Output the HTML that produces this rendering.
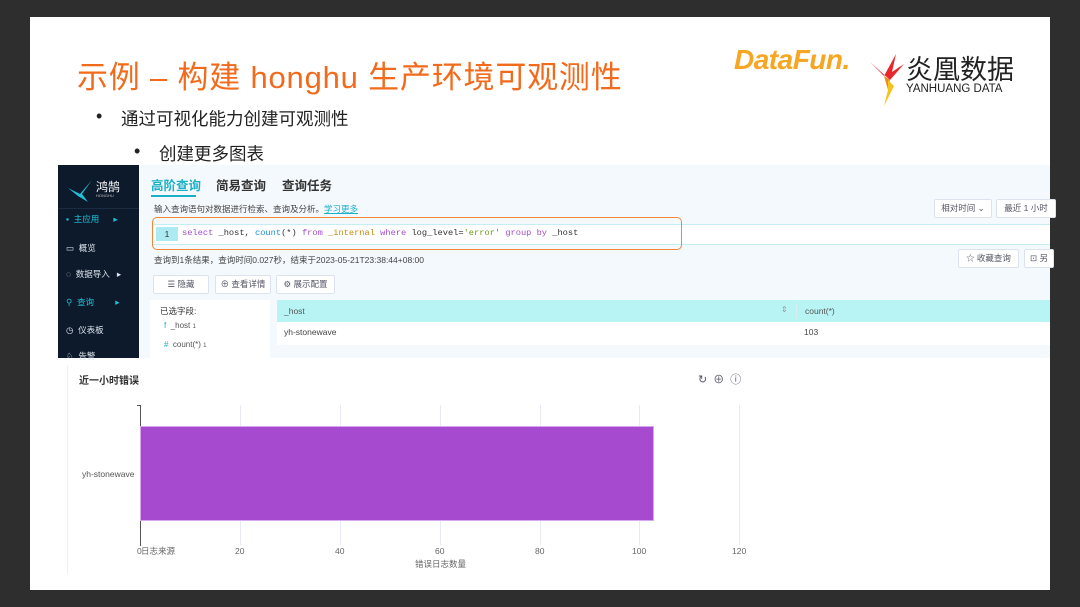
<!DOCTYPE html>
<html><head><meta charset="utf-8">
<style>
*{margin:0;padding:0;box-sizing:border-box}
body{width:1080px;height:607px;background:#2e2e2e;position:relative;overflow:hidden;font-family:"Liberation Sans","Noto Sans CJK SC",sans-serif}
.a{position:absolute;white-space:nowrap}
#slide{position:absolute;left:30px;top:17px;width:1020px;height:573px;background:#fff}
.mono{font-family:"Liberation Mono","Noto Sans CJK SC",monospace}
.btn{position:absolute;height:19px;border:1px solid #dde3ee;background:#fff;border-radius:2px;font-size:8.5px;color:#556;line-height:17px;text-align:center}
.nav{position:absolute;left:64px;font-size:8.5px;color:#dfe6ee}
.tick{position:absolute;top:546px;font-size:8.5px;color:#666}
.grid{position:absolute;top:405px;width:1px;height:140px;background:#e8e8f6}
</style></head><body>
<div id="slide"></div>
<div class="a" style="left:77px;top:52px;font-size:31px;color:#f26a1b;letter-spacing:0.8px">示例 – 构建 honghu 生产环境可观测性</div>
<div class="a" style="left:96px;top:106px;font-size:18px;color:#222">•</div>
<div class="a" style="left:121px;top:106px;font-size:17.5px;color:#222">通过可视化能力创建可观测性</div>
<div class="a" style="left:134px;top:141px;font-size:18px;color:#222">•</div>
<div class="a" style="left:159px;top:141px;font-size:17.5px;color:#222">创建更多图表</div>

<!-- logos -->
<div class="a" style="left:734px;top:44px;font-size:28px;font-style:italic;font-weight:bold;color:#f6a623;letter-spacing:-0.5px">DataFun.</div>
<svg class="a" style="left:866px;top:50px" width="40" height="56" viewBox="0 0 40 56"><path d="M4 12 L18 26 L30 4 L26 22 L38 14 L24 30 Z" fill="#e8262b"/><path d="M18 26 L24 30 L22 40 Z" fill="#f08a1c"/><path d="M22 30 L28 36 L18 56 L22 40Z" fill="#f7c21a"/></svg>
<div class="a" style="left:906px;top:48px;font-size:27px;color:#222">炎凰数据</div>
<div class="a" style="left:906px;top:83px;font-size:11.5px;color:#222">YANHUANG DATA</div>

<!-- app -->
<div class="a" style="left:139px;top:165px;width:911px;height:193px;background:#f4f9fd"></div>
<div class="a" style="left:58px;top:165px;width:81px;height:193px;background:#0c1a2b"></div>
<svg class="a" style="left:66px;top:178px" width="30" height="26" viewBox="0 0 30 26"><path d="M26 2 L14 16 L2 10 L12 18 L22 24 L16 16 Z" fill="#1fc3d9"/></svg>
<div class="a" style="left:96px;top:178px;font-size:12px;color:#fff">鸿鹄</div>
<div class="a" style="left:96px;top:193px;font-size:4px;color:#bbb">HONGHU</div>
<div class="a" style="left:58px;top:208px;width:81px;height:1px;background:#1c2c40"></div>
<div class="nav" style="left:66px;top:213px;color:#1fc3d9">▪ &nbsp;主应用 &nbsp;&nbsp;&nbsp;&nbsp;&nbsp;▸</div>
<div class="nav" style="left:66px;top:242px">▭ &nbsp;概览</div>
<div class="nav" style="left:66px;top:268px">◌ &nbsp;数据导入 &nbsp;&nbsp;▸</div>
<div class="nav" style="left:66px;top:296px;color:#1fc3d9">⚲ &nbsp;查询 &nbsp;&nbsp;&nbsp;&nbsp;&nbsp;&nbsp;&nbsp;&nbsp;▸</div>
<div class="nav" style="left:66px;top:324px">◷ &nbsp;仪表板</div>
<div class="nav" style="left:66px;top:350px">♘ &nbsp;告警</div>

<div class="a" style="left:151px;top:175px;font-size:12.5px;font-weight:bold;color:#1ab0c8">高阶查询</div>
<div class="a" style="left:151px;top:195px;width:45px;height:2px;background:#1ab0c8"></div>
<div class="a" style="left:216px;top:175px;font-size:12.5px;font-weight:bold;color:#333">简易查询</div>
<div class="a" style="left:282px;top:175px;font-size:12.5px;font-weight:bold;color:#333">查询任务</div>
<div class="a" style="left:154px;top:203px;font-size:8.5px;color:#444">输入查询语句对数据进行检索、查询及分析。<span style="color:#1ab0c8;text-decoration:underline">学习更多</span></div>
<div class="btn" style="left:934px;top:199px;width:58px">相对时间 ⌄</div>
<div class="btn" style="left:996px;top:199px;width:60px">最近 1 小时</div>
<div class="a" style="left:152px;top:224px;width:898px;height:21px;background:#fff;border-top:1px solid #c4eef4;border-bottom:1px solid #c4eef4"></div>
<div class="a" style="left:156px;top:227px;width:22px;height:14px;background:#aeeaf2;font-size:8.5px;text-align:center;line-height:14px;color:#333" >1</div>
<div class="a mono" style="left:182px;top:228px;font-size:8.7px;color:#333"><span style="color:#a04dc8">select</span> _host, <span style="color:#1a8fd8">count</span>(*) <span style="color:#a04dc8">from</span> <span style="color:#c58a10">_internal</span> <span style="color:#a04dc8">where</span> log_level=<span style="color:#6a9a1a">'error'</span> <span style="color:#a04dc8">group by</span> _host</div>
<div class="a" style="left:152px;top:217px;width:530px;height:33px;border:1.5px solid #f2873a;border-radius:5px"></div>
<div class="a" style="left:154px;top:254px;font-size:8.5px;color:#444">查询到1条结果，查询时间0.027秒，结束于2023-05-21T23:38:44+08:00</div>
<div class="btn" style="left:958px;top:249px;width:61px">☆ 收藏查询</div>
<div class="btn" style="left:1024px;top:249px;width:30px">⊡ 另</div>
<div class="btn" style="left:153px;top:275px;width:56px">☰ 隐藏</div>
<div class="btn" style="left:215px;top:275px;width:56px">⊕ 查看详情</div>
<div class="btn" style="left:276px;top:275px;width:59px">⚙ 展示配置</div>
<div class="a" style="left:150px;top:300px;width:120px;height:58px;background:#fff"></div>
<div class="a" style="left:160px;top:305px;font-size:8.5px;color:#333">已选字段:</div>
<div class="a" style="left:164px;top:321px;font-size:8px;color:#555"><span style="color:#1ab0c8">f</span> &nbsp;_host <span style="font-size:6px">1</span></div>
<div class="a" style="left:164px;top:340px;font-size:8px;color:#555"><span style="color:#1ab0c8">#</span> &nbsp;count(*) <span style="font-size:6px">1</span></div>
<div class="a" style="left:277px;top:300px;width:773px;height:22px;background:#b9f4f5"></div>
<div class="a" style="left:284px;top:306px;font-size:8.5px;color:#555">_host</div>
<div class="a" style="left:781px;top:305px;font-size:8px;color:#999">⇕</div>
<div class="a" style="left:796px;top:303px;width:1px;height:16px;background:#d8eef0"></div>
<div class="a" style="left:805px;top:306px;font-size:8.5px;color:#555">count(*)</div>
<div class="a" style="left:277px;top:322px;width:773px;height:23px;background:#fff"></div>
<div class="a" style="left:284px;top:327px;font-size:8.5px;color:#444">yh-stonewave</div>
<div class="a" style="left:804px;top:327px;font-size:8.5px;color:#444">103</div>

<!-- chart -->
<div class="a" style="left:67px;top:366px;width:1px;height:208px;background:#e4f3f8"></div>
<div class="a" style="left:79px;top:372px;font-size:10px;font-weight:bold;color:#333">近一小时错误</div>
<div class="a" style="left:698px;top:371px;font-size:11px;color:#556;letter-spacing:6px">↻⊕ⓘ</div>
<div class="grid" style="left:240px"></div><div class="grid" style="left:340px"></div><div class="grid" style="left:440px"></div><div class="grid" style="left:540px"></div><div class="grid" style="left:639px"></div><div class="grid" style="left:739px"></div>
<div class="a" style="left:140px;top:405px;width:1px;height:141px;background:#555"></div>
<div class="a" style="left:137px;top:405px;width:3px;height:1px;background:#555"></div>
<div class="a" style="left:140px;top:426px;width:514px;height:95px;background:#a64bd0;border:1px solid #d7a8ee"></div>
<div class="a" style="left:82px;top:469px;font-size:8.5px;color:#555">yh-stonewave</div>
<div class="tick" style="left:137px">0</div>
<div class="a" style="left:141px;top:545px;font-size:8.5px;color:#666">日志来源</div>
<div class="tick" style="left:235px">20</div><div class="tick" style="left:335px">40</div><div class="tick" style="left:435px">60</div><div class="tick" style="left:535px">80</div><div class="tick" style="left:632px">100</div><div class="tick" style="left:732px">120</div>
<div class="a" style="left:415px;top:558px;font-size:8.5px;color:#666">错误日志数量</div>
</body></html>
